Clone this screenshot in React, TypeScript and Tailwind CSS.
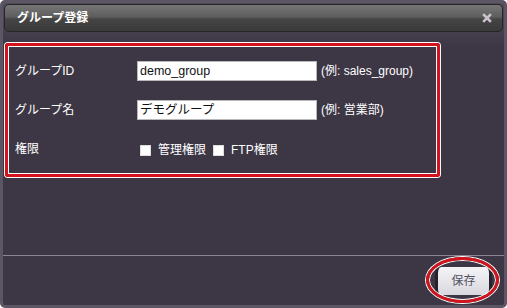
import React from "react";

const font = { fontFamily: '"Liberation Sans", "Noto Sans CJK JP", sans-serif' };

const Field: React.FC<{ label: string; value: string; hint: string }> = ({ label, value, hint }) => (
  <div className="flex items-center h-[20px]">
    <span className="w-[122px] text-[12px] text-white">{label}</span>
    <div className="w-[180px] h-[20px] bg-white border border-[#b9b9b9] flex items-center pl-[2px] text-[12.5px] text-[#111]">
      {value}
    </div>
    <span className="ml-[4px] text-[12px] text-white">{hint}</span>
  </div>
);

const Check: React.FC<{ label: string }> = ({ label }) => (
  <label className="flex items-center">
    <span className="w-[11px] h-[11px] bg-white border border-[#ddd] mr-[7px]" />
    <span className="text-[12px] text-white">{label}</span>
  </label>
);

export default function App() {
  return (
    <div
      style={font}
      className="w-[507px] h-[308px] rounded-[5px] border-[3px] border-[#5c5664] bg-[linear-gradient(#524c59_0px,#3d3645_45px)] flex flex-col"
    >
      <div className="mx-[1px] mt-[1px] h-[28px] rounded-[5px] border border-[#262428] bg-[linear-gradient(#767676_0%,#5e5e5e_45%,#444444_55%,#3a3a3a_100%)] flex items-center justify-between pl-[12px] pr-[10px]">
        <span className="text-[12px] font-bold text-white">グループ登録</span>
        <svg width="10" height="10" viewBox="0 0 10 10">
          <path d="M2 2 L8 8 M8 2 L2 8" stroke="#cbc3cb" strokeWidth="2.5" strokeLinecap="square" />
        </svg>
      </div>

      <div className="ml-[2px] mt-[11px] w-[435px] h-[134px] rounded-[3px] border-[3px] border-[#d3141c] shadow-[0_0_0_1px_#ffffff,inset_0_0_0_1px_#ffffff] pl-[7px] pt-[15px] flex flex-col gap-[19px]">
        <Field label="グループID" value="demo_group" hint="(例: sales_group)" />
        <Field label="グループ名" value="デモグループ" hint="(例: 営業部)" />
        <div className="flex items-center h-[20px]">
          <span className="w-[125px] text-[12px] text-white">権限</span>
          <div className="flex items-center gap-[7px] pt-[2px]">
            <Check label="管理権限" />
            <Check label="FTP権限" />
          </div>
        </div>
      </div>

      <div className="flex-1" />
      <div className="h-px bg-[#8b8593]" />

      <div className="h-[49px] flex items-center justify-end pr-[12px]">
        <div className="relative">
          <button className="w-[57px] h-[28px] rounded-[6px] border-x-[3px] border-[#26232a] bg-[linear-gradient(#f4f4f7,#d9d8df)] text-[12px] text-[#555060]">
            保存
          </button>
          <span className="absolute left-[-9px] top-[-10px] w-[73px] h-[46px] rounded-[50%] border-[3px] border-[#d3141c] shadow-[0_0_0_1px_#ffffff,inset_0_0_0_1px_#ffffff]" />
        </div>
      </div>
    </div>
  );
}
